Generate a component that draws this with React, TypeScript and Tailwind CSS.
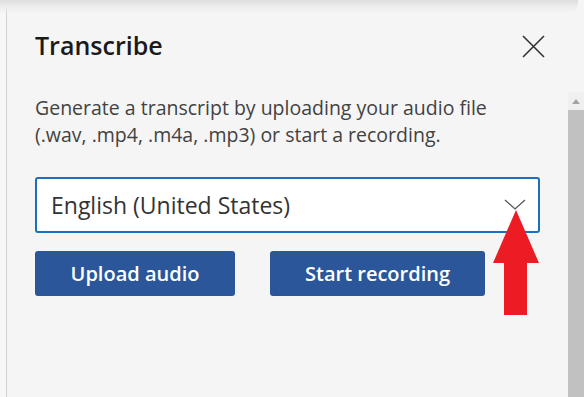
function RedArrow() {
  return (
    <svg className="absolute left-[492px] top-[210px]" width="48" height="108" viewBox="0 0 48 108">
      <polygon points="24,0 47,53 35,53 35,105 12,105 12,53 1,53" fill="#ed1c24" />
    </svg>
  );
}

export default function App() {
  return (
    <div className="relative w-[584px] h-[397px] overflow-hidden bg-[#f5f5f5] flex font-['Open_Sans',sans-serif]">
      <div className="w-[7px] shrink-0 border-r border-[#d2d2d2] bg-[#f7f7f7]" />
      <div className="flex-1 pl-[28px] pr-[21px] pt-[31px]">
        <div className="flex items-center justify-between h-[30px]">
          <h1 className="text-[25px] font-semibold text-[#1a1a1a]">Transcribe</h1>
          <svg width="23" height="23" viewBox="0 0 23 23" className="mr-[2px]">
            <path d="M1 1 L22 22 M22 1 L1 22" stroke="#333" strokeWidth="1.6" fill="none" />
          </svg>
        </div>
        <p className="mt-[33px] text-[19.5px] leading-[27px] text-[#424242] whitespace-nowrap">
          Generate a transcript by uploading your audio file
          <br />
          (.wav, .mp4, .m4a, .mp3) or start a recording.
        </p>
        <div className="mt-[29px] w-[505px] h-[56px] rounded-[3px] border-2 border-[#1b6ec2] bg-white flex items-center justify-between pl-[14px] pr-[12px]">
          <span className="text-[23px] text-[#333]">English (United States)</span>
          <svg width="22" height="11" viewBox="0 0 22 11" className="mt-[-2px]">
            <polyline points="1,1 11,10 21,1" fill="none" stroke="#555" strokeWidth="1.3" />
          </svg>
        </div>
        <div className="mt-[18px] flex gap-[35px]">
          <button className="w-[200px] h-[45px] rounded-[3px] bg-[#2b579a] text-white text-[20px] font-semibold">Upload audio</button>
          <button className="w-[215px] h-[45px] rounded-[3px] bg-[#2b579a] text-white text-[20px] font-semibold">Start recording</button>
        </div>
      </div>
      <div className="w-[16px] shrink-0 flex flex-col pt-[92px]">
        <div className="h-[18px] bg-[#f0f0f0] flex items-center justify-center">
          <svg width="8" height="5" viewBox="0 0 8 5"><polygon points="4,0 8,5 0,5" fill="#a3a3a3" /></svg>
        </div>
        <div className="flex-1 bg-[#c1c1c1]" />
      </div>
      <div className="absolute left-0 top-0 w-[578px] h-[14px] rounded-br-[10px] bg-gradient-to-b from-[#dedede] via-[#eeeeee] to-transparent" />
      <RedArrow />
    </div>
  );
}
